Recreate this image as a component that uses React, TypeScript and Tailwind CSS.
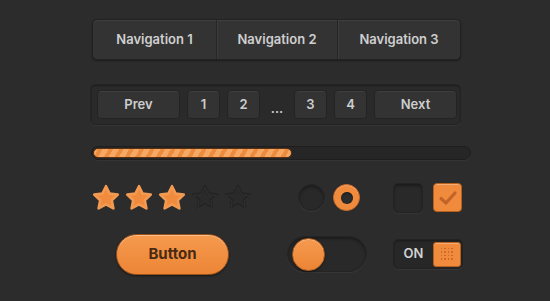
import React from 'react';

const font = { fontFamily: 'Inter, "Open Sans", sans-serif' };

const STAR = 'M15 2.2 L18.6 9.6 L26.8 10.6 L20.8 16.3 L22.4 24.4 L15 20.4 L7.6 24.4 L9.2 16.3 L3.2 10.6 L11.4 9.6 Z';

const StarIcon: React.FC<{ on: boolean }> = ({ on }) => (
  <svg width="30" height="28" viewBox="0 0 30 28">
    <path
      d={STAR}
      fill={on ? '#f08a3c' : '#2a2a2a'}
      stroke={on ? '#f39a52' : '#232323'}
      strokeWidth="2.6"
      strokeLinejoin="round"
    />
    {!on && (
      <path d={STAR} fill="none" stroke="#353535" strokeWidth="0.8" strokeLinejoin="round" transform="translate(0 1)" />
    )}
  </svg>
);

const PageBtn: React.FC<{ label: string; wide?: boolean }> = ({ label, wide }) => (
  <div
    className={`${wide ? 'w-[83px]' : 'w-[33px]'} h-[29px] flex items-center justify-center rounded-[4px] bg-[#333333] border border-[#232323] shadow-[inset_0_1px_0_rgba(255,255,255,0.06)] text-[13px] font-semibold text-[#cdcdcd]`}
  >
    {label}
  </div>
);

export default function App() {
  return (
    <div className="w-[550px] h-[301px] bg-[#2c2c2c] overflow-hidden" style={font}>
      <div className="flex flex-col pl-[90px] pt-[19px]">
        {/* navigation */}
        <div className="ml-[2px] w-[369px] h-[41px] flex rounded-[5px] bg-[#333333] border border-[#222222] shadow-[inset_0_1px_0_rgba(255,255,255,0.06),0_1px_2px_rgba(0,0,0,0.4)] text-[13px] font-semibold text-[#cfcfcf]">
          <div className="w-[124px] flex items-center justify-center border-r border-[#262626]">Navigation 1</div>
          <div className="w-[121px] flex items-center justify-center border-r border-[#262626] shadow-[inset_1px_0_0_rgba(255,255,255,0.04)]">Navigation 2</div>
          <div className="flex-1 flex items-center justify-center shadow-[inset_1px_0_0_rgba(255,255,255,0.04)]">Navigation 3</div>
        </div>

        {/* pagination */}
        <div className="mt-[24px] w-[371px] h-[41px] flex items-center gap-[7px] pl-[6px] rounded-[5px] bg-[#2a2a2a] border border-[#242424] shadow-[inset_0_1px_2px_rgba(0,0,0,0.35),0_1px_0_rgba(255,255,255,0.04)]">
          <PageBtn label="Prev" wide />
          <PageBtn label="1" />
          <PageBtn label="2" />
          <div className="w-[20px] flex justify-center pt-[8px] text-[13px] font-semibold text-[#cdcdcd]">...</div>
          <PageBtn label="3" />
          <PageBtn label="4" />
          <PageBtn label="Next" wide />
        </div>

        {/* progress */}
        <div className="mt-[21px] ml-[1px] w-[380px] h-[14px] rounded-full bg-[#262626] border border-[#1e1e1e] shadow-[0_1px_0_rgba(255,255,255,0.04)] p-[1px]">
          <div className="w-[199px] h-full rounded-full border border-[#5a2f10] bg-[repeating-linear-gradient(-60deg,#f7a865_0px,#f7a865_5px,#ec8c3e_5px,#ec8c3e_9px)]" />
        </div>

        {/* stars / radios / checkboxes */}
        <div className="mt-[22px] flex items-center h-[31px]">
          <div className="ml-[1px] flex gap-[3px]">
            <StarIcon on />
            <StarIcon on />
            <StarIcon on />
            <StarIcon on={false} />
            <StarIcon on={false} />
          </div>
          <div className="ml-[45px] w-[27px] h-[27px] rounded-full bg-[#292929] border border-[#232323] shadow-[inset_0_2px_3px_rgba(0,0,0,0.35),0_1px_0_rgba(255,255,255,0.05)]" />
          <div className="ml-[8px] w-[27px] h-[27px] rounded-full bg-[#f08a3c] border border-[#c8692a] shadow-[inset_0_1px_0_rgba(255,255,255,0.25)] flex items-center justify-center">
            <div className="w-[12px] h-[12px] rounded-full bg-[#2c2c2c] shadow-[inset_0_1px_2px_rgba(0,0,0,0.5)]" />
          </div>
          <div className="ml-[33px] w-[30px] h-[30px] rounded-[5px] bg-[#292929] border border-[#232323] shadow-[inset_0_2px_3px_rgba(0,0,0,0.35),0_1px_0_rgba(255,255,255,0.05)]" />
          <div className="ml-[10px] w-[29px] h-[29px] rounded-[4px] bg-[#f08a3c] border border-[#b5601f] shadow-[inset_0_1px_0_rgba(255,255,255,0.3)] flex items-center justify-center">
            <svg width="20" height="16" viewBox="0 0 20 16">
              <path d="M3 8.5 L8 13 L17 3" fill="none" stroke="#c2642a" strokeWidth="3.2" strokeLinecap="round" strokeLinejoin="round" />
            </svg>
          </div>
        </div>

        {/* button / toggle / on switch */}
        <div className="mt-[20px] flex items-center h-[42px]">
          <div className="ml-[26px] w-[113px] h-[41px] rounded-full bg-[linear-gradient(#f59a4e,#ec8536)] border border-[#9c5119] shadow-[inset_0_1px_0_rgba(255,255,255,0.35),0_1px_2px_rgba(0,0,0,0.5)] flex items-center justify-center text-[15px] font-bold text-[#4a2912]">
            Button
          </div>
          <div className="ml-[58px] w-[80px] h-[36px] rounded-full bg-[#292929] border border-[#242424] shadow-[inset_0_2px_3px_rgba(0,0,0,0.35),0_1px_0_rgba(255,255,255,0.05)] flex items-center">
            <div className="ml-[4px] w-[33px] h-[33px] rounded-full bg-[linear-gradient(#f59a4e,#ec8536)] border border-[#b5601f] shadow-[inset_0_1px_0_rgba(255,255,255,0.3),0_1px_2px_rgba(0,0,0,0.5)]" />
          </div>
          <div className="ml-[26px] w-[70px] h-[30px] rounded-[5px] bg-[#272727] border border-[#222222] shadow-[inset_0_1px_2px_rgba(0,0,0,0.35),0_1px_0_rgba(255,255,255,0.05)] flex items-center">
            <div className="w-[39px] text-center text-[13px] font-semibold text-[#d2d2d2]">ON</div>
            <div className="w-[28px] h-[25px] rounded-[3px] bg-[#f08a3c] border border-[#b5601f] shadow-[inset_0_1px_0_rgba(255,255,255,0.3)] grid grid-cols-[repeat(4,2px)] auto-rows-[2px] gap-[1.5px] place-content-center">
              {Array.from({ length: 16 }).map((_, i) => (
                <div key={i} className="w-[1.5px] h-[1.5px] rounded-full bg-[#c45f22]" />
              ))}
            </div>
          </div>
        </div>
      </div>
    </div>
  );
}
